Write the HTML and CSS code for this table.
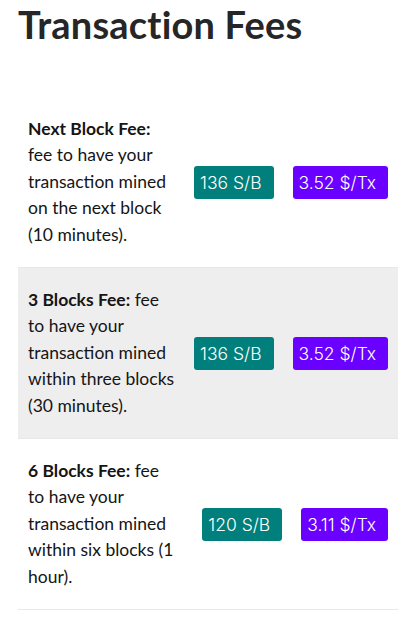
FILE: index.html
```html
<!DOCTYPE html>
<html>
<head>
<meta charset="utf-8">
<link rel="stylesheet" href="styles.css">
</head>
<body>
<h1 class="title">Transaction Fees</h1>
<div class="fees">
  <div class="row">
    <div class="desc"><b>Next Block Fee:</b><br>fee to have your<br>transaction mined<br>on the next block<br>(10 minutes).</div>
    <div class="badges"><span class="badge teal">136 S/B</span><span class="badge purple">3.52 $/Tx</span></div>
  </div>
  <div class="row alt">
    <div class="desc"><b>3 Blocks Fee:</b> fee<br>to have your<br>transaction mined<br>within three blocks<br>(30 minutes).</div>
    <div class="badges"><span class="badge teal">136 S/B</span><span class="badge purple">3.52 $/Tx</span></div>
  </div>
  <div class="row">
    <div class="desc"><b>6 Blocks Fee:</b> fee<br>to have your<br>transaction mined<br>within six blocks (1<br>hour).</div>
    <div class="badges"><span class="badge teal">120 S/B</span><span class="badge purple">3.11 $/Tx</span></div>
  </div>
</div>
</body>
</html>
```
FILE: styles.css
```css
html, body {
  margin: 0;
  padding: 0;
  background: #ffffff;
}
body {
  padding: 0 18px;
  font-family: Lato, "Open Sans", sans-serif;
  color: #151515;
}
.title {
  margin: 0;
  padding-top: 2px;
  font-size: 38px;
  line-height: 44px;
  font-weight: 700;
  color: #262626;
  letter-spacing: 0.2px;
}
.fees {
  margin-top: 51px;
}
.row {
  display: flex;
  align-items: center;
  padding: 19px 10px;
  border-bottom: 1px solid #e8e8e8;
  height: 132px;
}
.row.alt {
  background: #eeeeee;
}
.desc {
  flex: 1;
  font-size: 17.5px;
  line-height: 26.5px;
  white-space: nowrap;
}
.desc b {
  font-weight: 700;
}
.badges {
  display: flex;
  gap: 19px;
  justify-content: flex-end;
}
.badge {
  display: inline-block;
  height: 33px;
  line-height: 33px;
  padding: 0 12px 0 6px;
  border-radius: 3px;
  color: #ffffff;
  font-family: Inter, Roboto, sans-serif;
  font-size: 17.5px;
  font-weight: 300;
}
.teal {
  background: #007f7c;
}
.purple {
  background: #6a00ff;
}
```
